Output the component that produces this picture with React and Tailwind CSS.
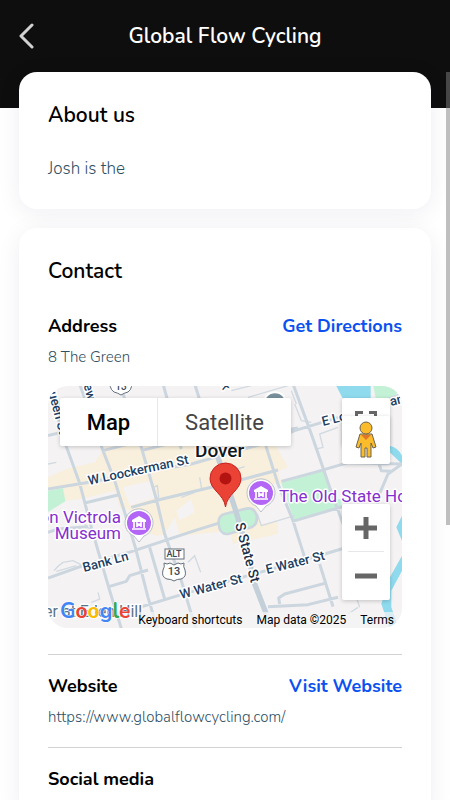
import React from 'react';

const STREETS = [
    'M-5 15 L20 60 L45 160 L95 298 L130 430 L150 500 L185 620 L222 740',
    'M95 0 L165 200 L200 290 L230 385 L262 490 L300 640 L330 740',
    'M215 0 L280 190 L325 345 L350 450 L400 590 L445 740',
    'M345 0 L362 60 L400 195',
    'M305 490 L350 645',
    'M440 0 L500 190',
    'M630 100 L655 190 L690 300 L735 410 L770 520 M815 540 L855 668',
    'M735 0 L790 150 L845 310 L885 420',
    'M0 155 L40 145 M0 315 L110 297 L430 240 L520 215 L660 175 L740 140 L890 95 L1062 30',
    'M110 357 L210 333',
    'M165 200 L300 165 M280 200 L400 170',
    'M250 370 L330 348 L480 312 L600 282 L690 258',
    'M700 292 L800 265 L900 236 L1062 240',
    'M0 445 L30 435 L120 428',
    'M0 582 L105 545 L250 503 L440 440 L520 415',
    'M731 413 L890 366',
    'M185 607 L235 592 L245 575 L300 558',
    'M225 685 L400 632 L600 575 L830 510 L890 492',
    'M660 668 L780 662 L870 640',
    'M695 660 L692 642 L710 630 L830 598',
    'M1062 240 L1020 270 L990 340 L985 400',
    'M990 230 L1000 260 L1030 262',
    'M660 170 L700 140 L750 132',
];

const LANES = [
    'M18 560 Q30 545 45 535 L75 530 L105 545 M25 562 L85 545',
    'M315 310 L328 305 L332 340 L320 345',
    'M420 535 L440 515 L458 565',
    'M130 655 L155 645 L150 625',
    'M550 260 L590 248 M455 280 L462 320',
    'M815 220 L805 195 L825 190 L815 150 L870 130',
    'M640 425 L740 395 M640 425 L628 390',
    'M740 60 L760 110 L790 115 M730 20 L745 60',
    'M900 690 L930 670 M925 640 L935 670',
    'M0 240 L25 235 M600 40 L720 5 M550 20 L610 5',
    'M100 410 L125 435 M400 340 L440 325',
];

function MuseumPin({x, y}) {
    return (
        <g transform={`translate(${x} ${y})`}>
            <path d="M0 19 L-5 13 A14 14 0 1 1 5 13 Z" fill="#fff" stroke="#a9b2ba" strokeWidth=".8" />
            <circle r="12" fill="#b366f6" />
            <path d="M0 -7 L7 -3 V-1 H-7 V-3 Z" fill="#fff" />
            <path d="M-5 -1 V5 M5 -1 V5 M-7 6 H7 M-2 4 V0 L0 2 L2 0 V4" fill="none" stroke="#fff" strokeWidth="1.7" />
        </g>
    );
}

function MapCanvas() {
    return (
        <svg
            className="absolute inset-0 h-full w-full"
            viewBox="0 0 354 242"
            preserveAspectRatio="xMidYMid slice"
            fontFamily="Roboto, sans-serif"
            fontWeight="500"
            aria-hidden="true"
        >
            <rect width="354" height="242" fill="#f4f2f3" />
            {/* land, water and streets share one coarse grid */}
            <g transform="translate(0 -2) scale(.33333)">
                <g fill="#f8efdc">
                    <path d="M0 280 L55 255 L140 235 L170 190 L440 130 L640 170 L680 180 L720 250 L690 262 L700 300 L600 300 L640 420 L690 415 L690 450 L555 480 L545 440 L395 455 L380 400 L350 450 L330 455 L262 440 L250 380 L215 370 L200 320 L100 345 L50 350 L45 310 L0 315 Z" />
                </g>
                <g fill="#f4f2f3">
                    <path d="M105 360 L205 337 L225 400 L120 430 Z M225 310 L310 290 L325 340 L245 365 Z M385 380 L430 345 L440 385 L395 410 Z" />
                </g>
                <g fill="#c3f1d5">
                    <path d="M0 320 L45 312 L52 352 L0 384 Z" />
                    <path d="M700 296 L828 260 L853 345 L880 345 L880 366 L738 408 Z" />
                    <path d="M975 0 H1062 V18 L1010 52 H985 Z" />
                </g>
                <g fill="#90daee">
                    <path d="M862 0 H968 V45 H885 Z" />
                    <path d="M1025 185 Q1050 190 1062 215 V240 L1025 205 Z" />
                    <path d="M1062 395 L1045 430 L1062 470 V515 L1020 590 L1000 660 L1025 732 H1052 L1030 670 L1030 620 L1062 560 Z" />
                </g>
                <path d={LANES.join(' ')} fill="none" stroke="#d2dae1" strokeWidth="4" />
                <path d={STREETS.join(' ')} fill="none" stroke="#ccd6df" strokeWidth="9" strokeLinejoin="round" />
                <path d="M530 390 Q510 395 512 420 Q515 452 540 450 L610 430 Q632 418 625 392 Q618 370 595 374 Z" fill="#c3f1d5" stroke="#ccd6df" strokeWidth="8" />
                <path d="M500 190 L560 370 L590 470 L620 600 L655 690" fill="none" stroke="#c3cfd9" strokeWidth="16" />
                <circle cx="681" cy="60" r="38" fill="#fff" />
                <circle cx="681" cy="60" r="32" fill="#78909c" />
            </g>

            <g fill="#21405f" stroke="#fff" strokeWidth="3" strokeLinejoin="round" paintOrder="stroke" fontSize="13">
                <text transform="translate(41 99) rotate(-12)">W Loockerman St</text>
                <text transform="translate(36 186) rotate(-15)">Bank Ln</text>
                <text transform="translate(133 213) rotate(-15)">W Water St</text>
                <text transform="translate(219 188) rotate(-14)">E Water St</text>
                <text transform="translate(187 138) rotate(75)" fill="#1b3048" fontSize="14">S State St</text>
                <text transform="translate(275 40) rotate(-14)">E Lo</text>
                <text transform="translate(343 20) rotate(-14)">an</text>
                <text transform="translate(-2 -2) rotate(75)">Queen St</text>
                <text transform="translate(33 -10) rotate(75)">New St</text>
                <text transform="translate(173 -2) rotate(75)">k</text>
                <text x="-4" y="231" fill="#5b7389" fontSize="16" fontWeight="400">er at Eden Hill</text>
            </g>
            <g stroke="#fff" strokeWidth="3" strokeLinejoin="round" paintOrder="stroke">
                <text x="147" y="71" fill="#101820" fontSize="19">Dover</text>
                <g fill="#8430ce" fontSize="17" fontWeight="400">
                    <text x="73" y="137" textAnchor="end">Johnson Victrola</text>
                    <text x="73" y="153" textAnchor="end">Museum</text>
                    <text x="231" y="116">The Old State House</text>
                </g>
            </g>

            <g stroke="#65717c" fill="#fff">
                <path d="M63 -8 H82 Q86 2 80 6 Q76 7 73 9 Q70 7 66 6 Q60 2 63 -8 Z" />
                <path d="M116 177 Q119 179 122 177 L126 179 L130 177 Q133 179 136 177 Q135 181 137 184 Q139 191 133 193 Q129 193 126 195 Q123 193 119 193 Q113 191 115 184 Q117 181 116 177 Z" />
                <rect x="117" y="163" width="19" height="10" />
            </g>
            <g fill="#3b4854" textAnchor="middle">
                <text x="73" y="4" fontSize="10">13</text>
                <text x="126" y="189" fontSize="11">13</text>
                <text x="126" y="171" fontSize="9">ALT</text>
            </g>

            <MuseumPin x={91} y={137} />
            <MuseumPin x={213} y={107} />
            <path
                d="M177.500 121 C176 108 162 104 162 92.500 A15.500 15.500 0 0 1 193 92.500 C193 104 179 108 177.500 121 Z"
                fill="#ea4335"
                stroke="#c5221f"
                strokeWidth="1"
            />
            <circle cx="177.500" cy="92.500" r="6" fill="#b31412" />

            <text
                x="12"
                y="232"
                fontFamily="Nunito, Lato, sans-serif"
                fontWeight="700"
                fontSize="21"
                stroke="#fff"
                strokeWidth="1"
                paintOrder="stroke"
            >
                <tspan fill="#4285f4">G</tspan>
                <tspan fill="#ea4335">o</tspan>
                <tspan fill="#fbbc04">o</tspan>
                <tspan fill="#4285f4">g</tspan>
                <tspan fill="#34a853">l</tspan>
                <tspan fill="#ea4335">e</tspan>
            </text>
        </svg>
    );
}

function Pegman() {
    return (
        <svg width="22" height="38" viewBox="0 0 22 38" fill="#fbbc2c" stroke="#6b6250" strokeWidth="1">
            <path d="M5 13 H17 L21 26 L18 27 L16 22 V36 H12 V27 H10 V36 H6 V22 L4 27 L1 26 Z" />
            <circle cx="11" cy="7" r="6" />
            <path d="M6 14 L11 19 L16 14 Z" fill="#e1762b" stroke="none" />
        </svg>
    );
}

function AddressMap() {
    return (
        <div className="relative mt-[17px] h-[242px] overflow-hidden rounded-[20px] font-[Roboto,sans-serif]">
            <MapCanvas />

            <div className="absolute top-3 left-3 flex h-12 rounded-xs bg-white text-[22px] shadow-[0_1px_4px_rgba(0,0,0,0.2)]">
                <button className="w-[98px] border-r border-gray-200 font-medium text-black">Map</button>
                <button className="w-[133px] text-[#444]">Satellite</button>
            </div>

            <button aria-label="Toggle fullscreen" className="absolute top-3 right-3 flex h-12 w-12 justify-center rounded-xs bg-white pt-[13px] shadow-[0_1px_4px_rgba(0,0,0,0.2)]">
                <svg width="22" height="22" viewBox="0 0 22 22" fill="none" stroke="#666" strokeWidth="3">
                    <path d="M1.500 8 V1.500 H8 M14 1.500 H20.500 V8 M1.500 14 V20.500 H8 M14 20.500 H20.500 V14" />
                </svg>
            </button>
            <button aria-label="Street View" className="absolute top-[30px] right-3 flex h-12 w-12 items-center justify-center rounded-xs bg-white shadow-[0_1px_4px_rgba(0,0,0,0.2)]">
                <Pegman />
            </button>

            <div className="absolute right-3 bottom-7 flex w-12 flex-col rounded-xs bg-white px-1.5 shadow-[0_1px_4px_rgba(0,0,0,0.2)]">
                <button aria-label="Zoom in" className="flex h-12 items-center justify-center border-b border-gray-200">
                    <svg width="22" height="22" viewBox="0 0 22 22" stroke="#666" strokeWidth="5">
                        <path d="M0 11 H22 M11 0 V22" />
                    </svg>
                </button>
                <button aria-label="Zoom out" className="flex h-12 items-center justify-center">
                    <svg width="22" height="22" viewBox="0 0 22 22" stroke="#666" strokeWidth="5">
                        <path d="M0 11 H22" />
                    </svg>
                </button>
            </div>

            <div className="absolute right-0 bottom-0 flex gap-3.5 bg-[#f5f5f5]/70 pr-2 text-xs leading-4 text-black">
                <button>Keyboard shortcuts</button>
                <span>Map data ©2025</span>
                <a href="#terms">Terms</a>
            </div>
        </div>
    );
}

function Card({title, children}) {
    return (
        <section className="rounded-[18px] bg-white px-[29px] pt-[29px] pb-7 shadow-[0_4px_24px_rgba(30,30,80,0.07)]">
            <h2 className="text-[21px] leading-7 font-semibold text-black">{title}</h2>
            {children}
        </section>
    );
}

function Row({title, link, href, text}) {
    return (
        <>
            <div className="flex items-center justify-between text-lg font-bold">
                <h3 className="text-black">{title}</h3>
                {link && <a className="text-[#0b50f0]" href={href}>{link}</a>}
            </div>
            {text && <p className="mt-[5px] text-[15px] leading-6 font-light text-[#2f4f63]">{text}</p>}
        </>
    );
}

function App() {
    return (
        <div className="relative h-screen overflow-hidden bg-white font-[Nunito,Lato,sans-serif]">
            <header className="grid h-27 grid-cols-[72px_1fr_72px] bg-[#0e0e0e] pb-9">
                <button aria-label="Back" className="flex items-center pl-[19px]">
                    <svg width="15" height="26" viewBox="0 0 15 26" fill="none" stroke="#d2d2d2" strokeWidth="3" strokeLinecap="round" strokeLinejoin="round">
                        <path d="M13 2 L2 13 L13 24" />
                    </svg>
                </button>
                <h1 className="pt-[22px] text-center text-[21px] leading-7 font-semibold text-white">Global Flow Cycling</h1>
            </header>

            <main className="relative -mt-9 flex flex-col gap-[19px] px-[19px]">
                <Card title="About us">
                    <p className="mt-7 text-[17px] leading-6 font-light text-[#2f4f63]">Josh is the</p>
                </Card>

                <Card title="Contact">
                    <div className="mt-[27px]">
                        <Row title="Address" link="Get Directions" href="#directions" text="8 The Green" />
                        <AddressMap />
                    </div>
                    <div className="mt-[26px] border-t border-[#d2d2d2] pt-[17px]">
                        <Row title="Website" link="Visit Website" href="https://www.globalflowcycling.com/" text="https://www.globalflowcycling.com/" />
                    </div>
                    <div className="mt-[18px] border-t border-[#d2d2d2] pt-[17px]">
                        <Row title="Social media" />
                    </div>
                </Card>
            </main>

            {/* scroll thumb */}
            <div className="absolute top-18 right-0 h-[453px] w-1 bg-[#808080]/50" />
        </div>
    );
}

export default App;
